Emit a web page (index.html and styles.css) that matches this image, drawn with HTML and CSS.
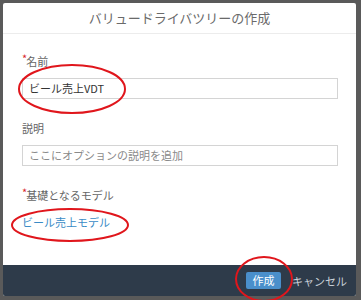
FILE: index.html
```html
<html>
<head>
  <title>バリュードライバツリーの作成</title>
  <link rel="stylesheet" href="styles.css">
</head>
<body>
  <div class="dialog">
    <div class="header">バリュードライバツリーの作成</div>

    <div class="content">
      <div class="field">
        <div class="label"><span class="req">*</span>名前</div>
        <div class="input">ビール売上VDT</div>
      </div>

      <div class="field">
        <div class="label">説明</div>
        <div class="input placeholder">ここにオプションの説明を追加</div>
      </div>

      <div class="field">
        <div class="label"><span class="req">*</span>基礎となるモデル</div>
        <div class="link">ビール売上モデル</div>
      </div>
    </div>

    <div class="footer">
      <button class="btn-create">作成</button>
      <span class="btn-cancel">キャンセル</span>
    </div>
  </div>

  <!-- annotation marks -->
  <svg class="marks" width="361" height="300" viewBox="0 0 361 300">
    <ellipse cx="72" cy="89" rx="53" ry="24" />
    <ellipse cx="70" cy="225" rx="58" ry="16" />
    <ellipse cx="264" cy="279" rx="28" ry="22" />
  </svg>
</body>
</html>
```

FILE: styles.css
```css
html, body {
  margin: 0;
  padding: 0;
}
body {
  width: 361px;
  height: 300px;
  background: #5a5a5a;
  padding: 3px 5px 4px 3px;
  box-sizing: border-box;
  font: 11px "Noto Sans CJK JP", "Noto Sans", sans-serif;
  position: relative;
  overflow: hidden;
}
.dialog {
  background: #fff;
  height: 293px;
  display: flex;
  flex-direction: column;
  border-radius: 2px;
  overflow: hidden;
}
.header {
  height: 30px;
  line-height: 30px;
  text-align: center;
  font-size: 13px;
  color: #6a6a6a;
  border-bottom: 1px solid #ececec;
}
.content {
  flex: 1;
  padding: 20px 18px 0 19px;
}
.field {
  margin-bottom: 22px;
}
.label {
  color: #666;
  line-height: 14px;
  margin-bottom: 10px;
}
.req {
  color: #d9262c;
  font-size: 11px;
  position: relative;
  top: -3px;
  margin-right: -1px;
}
.input {
  height: 19px;
  line-height: 19px;
  border: 1px solid #d4d4d4;
  padding-left: 6px;
  color: #333;
}
.input.placeholder {
  color: #8a8a8a;
}
.link {
  color: #3a8bc6;
  line-height: 14px;
  margin-top: 13px;
}
.footer {
  height: 31px;
  background: #2e3b4a;
  display: flex;
  align-items: center;
  justify-content: flex-end;
  padding-right: 9px;
  gap: 11px;
}
.btn-create {
  font: 11px "Noto Sans CJK JP", "Noto Sans", sans-serif;
  background: #4a8fcb;
  color: #fff;
  border: none;
  border-radius: 2px;
  height: 17px;
  width: 35px;
  padding: 0;
  line-height: 17px;
}
.btn-cancel {
  color: #c9d0d8;
}
.marks {
  position: absolute;
  left: 0;
  top: 0;
}
.marks ellipse {
  fill: none;
  stroke: #e0161c;
  stroke-width: 2;
}
```
